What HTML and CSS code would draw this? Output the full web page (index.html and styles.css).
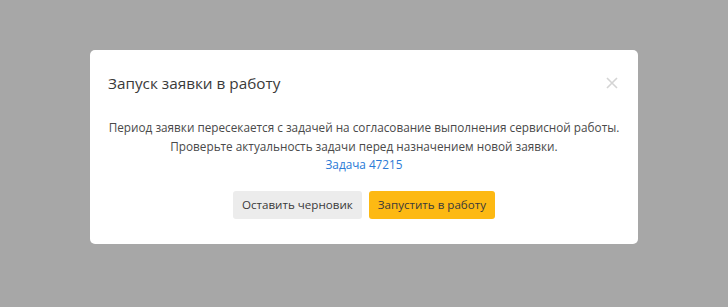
FILE: index.html
```html
<!DOCTYPE html>
<html lang="ru">
<head>
  <meta charset="UTF-8">
  <meta name="viewport" content="width=device-width, initial-scale=1.0">
  <title>Запуск заявки в работу</title>
  <link rel="stylesheet" href="styles.css">
</head>
<body>
  <!-- Modal -->
  <div class="overlay">
    <div class="modal">
      <div class="modal-header">
        <h1 class="modal-title">Запуск заявки в работу</h1>
        <button class="close" aria-label="Закрыть">
          <svg width="12" height="12" viewBox="0 0 12 12">
            <path d="M1 1 L11 11 M11 1 L1 11" stroke="#d4d4d4" stroke-width="1.6" fill="none"/>
          </svg>
        </button>
      </div>
      <div class="modal-body">
        <p>Период заявки пересекается с задачей на согласование выполнения сервисной работы.</p>
        <p>Проверьте актуальность задачи перед назначением новой заявки.</p>
        <a href="#" class="task-link">Задача 47215</a>
      </div>
      <div class="modal-footer">
        <button class="button button-secondary">Оставить черновик</button>
        <button class="button button-primary">Запустить в работу</button>
      </div>
    </div>
  </div>
</body>
</html>
```

FILE: styles.css
```css
body {
  margin: 0;
  padding: 0;
  font-family: "Open Sans", "Noto Sans", sans-serif;
  background-color: #a7a7a7;
}

.overlay {
  height: 307px;
  display: flex;
  justify-content: center;
  align-items: flex-start;
  padding-top: 50px;
  box-sizing: border-box;
}

.modal {
  width: 548px;
  height: 194px;
  background: #fff;
  border-radius: 5px;
  box-sizing: border-box;
  padding: 0 18px;
}

.modal-header {
  display: flex;
  justify-content: space-between;
  align-items: center;
  padding-top: 21px;
  height: 24px;
}

.modal-title {
  margin: 0;
  font-size: 15.3px;
  font-weight: 400;
  color: #3a3a3a;
}

.close {
  border: none;
  background: none;
  padding: 0;
  margin-right: 2px;
  cursor: pointer;
  display: flex;
}

.modal-body {
  margin-top: 23px;
  text-align: center;
  font-size: 11.75px;
  line-height: 18.5px;
  color: #4a4a4a;
}

.modal-body p {
  margin: 0;
}

.task-link {
  color: #2a7ad6;
  text-decoration: none;
}

.modal-footer {
  display: flex;
  justify-content: center;
  gap: 7px;
  margin-top: 17px;
}

.button {
  height: 28px;
  padding: 0 9px;
  font-family: inherit;
  font-size: 11.6px;
  border: none;
  border-radius: 3px;
  cursor: pointer;
  color: #3a3a3a;
}

.button-secondary {
  background-color: #ececec;
}

.button-primary {
  background-color: #fdb913;
}
```
